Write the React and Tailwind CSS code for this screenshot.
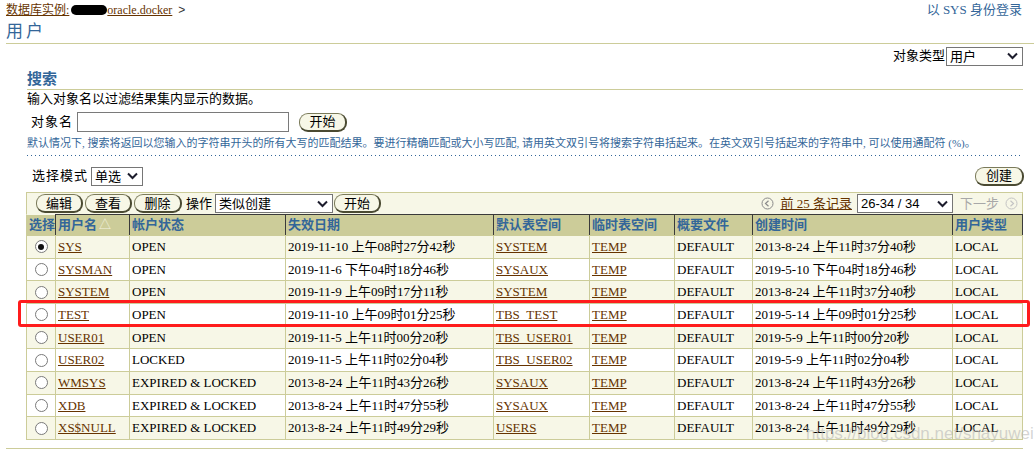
import React from "react";

const SERIF = "font-['Liberation_Serif','Noto_Sans_CJK_SC',serif]";

function Chevron() {
  return (
    <svg width="11" height="8" viewBox="0 0 11 8" className="shrink-0">
      <polyline points="1,1.5 5.5,6 10,1.5" fill="none" stroke="#1c1c2c" strokeWidth="2" />
    </svg>
  );
}

function Select({ w, children, sans }) {
  return (
    <div
      className={`flex items-center justify-between h-[19px] border border-[#767676] bg-white pl-[3px] pr-[4px] text-[13px] leading-none text-black ${sans ? "font-['Liberation_Sans','Noto_Sans_CJK_SC',sans-serif]" : ""}`}
      style={{ width: w }}
    >
      <span>{children}</span>
      <Chevron />
    </div>
  );
}

function Btn({ w, children }) {
  return (
    <div
      className="flex items-center justify-center h-[19px] rounded-[9px] border border-[#7a7a5a] border-b-2 border-r-2 border-b-[#4a4a32] border-r-[#4a4a32] bg-[#f7f7e7] text-[13px] leading-none text-black"
      style={{ width: w }}
    >
      {children}
    </div>
  );
}

function Circ({ dir, color }) {
  return (
    <svg width="13" height="13" viewBox="0 0 13 13" className="shrink-0">
      <circle cx="6.5" cy="6.5" r="5.5" fill="none" stroke={color} strokeWidth="1" />
      {dir === "l" ? (
        <polyline points="7.5,3.8 4.5,6.5 7.5,9.2" fill="none" stroke={color} strokeWidth="1.2" />
      ) : (
        <polyline points="5.5,3.8 8.5,6.5 5.5,9.2" fill="none" stroke={color} strokeWidth="1.2" />
      )}
    </svg>
  );
}

function Radio({ on }) {
  return (
    <div className="w-[13px] h-[13px] rounded-full border border-[#7a7a7a] bg-white flex items-center justify-center">
      {on && <div className="w-[6px] h-[6px] rounded-full bg-[#111]" />}
    </div>
  );
}

const cols = [29, 74, 156, 208, 96, 85, 78, 200, 71];
const heads = ["选择", "用户名", "帐户状态", "失效日期", "默认表空间", "临时表空间", "概要文件", "创建时间", "用户类型"];

const rows = [
  ["SYS", "OPEN", "2019-11-10 上午08时27分42秒", "SYSTEM", "TEMP", "DEFAULT", "2013-8-24 上午11时37分40秒", "LOCAL"],
  ["SYSMAN", "OPEN", "2019-11-6 下午04时18分46秒", "SYSAUX", "TEMP", "DEFAULT", "2019-5-10 下午04时18分46秒", "LOCAL"],
  ["SYSTEM", "OPEN", "2019-11-9 上午09时17分11秒", "SYSTEM", "TEMP", "DEFAULT", "2013-8-24 上午11时37分40秒", "LOCAL"],
  ["TEST", "OPEN", "2019-11-10 上午09时01分25秒", "TBS_TEST", "TEMP", "DEFAULT", "2019-5-14 上午09时01分25秒", "LOCAL"],
  ["USER01", "OPEN", "2019-11-5 上午11时00分20秒", "TBS_USER01", "TEMP", "DEFAULT", "2019-5-9 上午11时00分20秒", "LOCAL"],
  ["USER02", "LOCKED", "2019-11-5 上午11时02分04秒", "TBS_USER02", "TEMP", "DEFAULT", "2019-5-9 上午11时02分04秒", "LOCAL"],
  ["WMSYS", "EXPIRED & LOCKED", "2013-8-24 上午11时43分26秒", "SYSAUX", "TEMP", "DEFAULT", "2013-8-24 上午11时43分26秒", "LOCAL"],
  ["XDB", "EXPIRED & LOCKED", "2013-8-24 上午11时47分55秒", "SYSAUX", "TEMP", "DEFAULT", "2013-8-24 上午11时47分55秒", "LOCAL"],
  ["XS$NULL", "EXPIRED & LOCKED", "2013-8-24 上午11时49分29秒", "USERS", "TEMP", "DEFAULT", "2013-8-24 上午11时49分29秒", "LOCAL"],
];

const linkCols = new Set([0, 3, 4]);

export default function App() {
  return (
    <div className={`relative w-[1034px] h-[450px] overflow-hidden bg-white text-black ${SERIF}`}>
      {/* breadcrumb row */}
      <div className="flex items-center justify-between h-[19px] pl-[6px] pr-[12px]">
        <div className="flex items-center text-[12px] leading-none">
          <span className="text-[#663300] underline flex items-center">
            数据库实例:
            <span className="inline-block w-[36px] h-[10px] rounded-full bg-black ml-[2px]" />
            oracle.docker
          </span>
          <span className="ml-[6px] text-[#333] font-['Liberation_Sans',sans-serif] text-[12px]">&gt;</span>
        </div>
        <div className="text-[13px] leading-none text-[#336699]">以 SYS 身份登录</div>
      </div>

      {/* title */}
      <div className="h-[24px] pl-[6px] text-[17px] leading-[26px] tracking-[3px] text-[#336699]">用户</div>
      <div className="ml-[6px] h-px bg-[#cccc99]" />

      {/* object type */}
      <div className="mt-[3px] h-[18px] flex items-center justify-end pr-[11px] text-[13px]">
        <span className="mr-[1px]">对象类型</span>
        <Select w={77}>用户</Select>
      </div>

      {/* search */}
      <div className="ml-[27px] mr-[11px]">
        <div className="h-[24px] pt-[6px] text-[15px] leading-[16px] font-bold text-[#336699]">搜索</div>
        <div className="h-px bg-[#cccc99]" />
        <div className="h-[18px] text-[13px] leading-[18px]">输入对象名以过滤结果集内显示的数据。</div>
        <div className="mt-[4px] h-[20px] flex items-center text-[13px]">
          <span className="ml-[4px] tracking-[1px]">对象名</span>
          <div className="ml-[4px] w-[212px] h-[20px] border border-[#7a7a7a] bg-white" />
          <div className="ml-[10px]">
            <Btn w={48}>开始</Btn>
          </div>
        </div>
        <div className="h-[22px] text-[11px] leading-[22px] text-[#336699] whitespace-nowrap">
          默认情况下, 搜索将返回以您输入的字符串开头的所有大写的匹配结果。要进行精确匹配或大小写匹配, 请用英文双引号将搜索字符串括起来。在英文双引号括起来的字符串中, 可以使用通配符 (%)。
        </div>
        <div className="mt-[1px] h-px bg-[repeating-linear-gradient(to_right,#336699_0px,#336699_1px,transparent_1px,transparent_4px)]" />
      </div>

      {/* selection mode */}
      <div className="mt-[11px] ml-[32px] mr-[10px] h-[18px] flex items-center justify-between text-[13px]">
        <div className="flex items-center">
          <span className="tracking-[1px]">选择模式</span>
          <div className="ml-[3px]">
            <Select w={52}>单选</Select>
          </div>
        </div>
        <Btn w={49}>创建</Btn>
      </div>

      {/* table */}
      <div className="mt-[7px] ml-[26px] w-[997px]">
        <div className="h-[22px] flex items-center justify-between bg-[#f7f7e7] border border-b-0 border-[#cccc99] pl-[9px] pr-[4px] text-[13px]">
          <div className="flex items-center">
            <Btn w={47}>编辑</Btn>
            <div className="ml-[2px]"><Btn w={47}>查看</Btn></div>
            <div className="ml-[2px]"><Btn w={48}>删除</Btn></div>
            <span className="ml-[4px] mr-[3px]">操作</span>
            <Select w={118}>类似创建</Select>
            <div className="ml-[1px]"><Btn w={47}>开始</Btn></div>
          </div>
          <div className="flex items-center">
            <Circ dir="l" color="#8a8a8a" />
            <span className="ml-[6px] text-[#663300] underline">前 25 条记录</span>
            <div className="ml-[5px]">
              <Select w={96} sans>26-34 / 34</Select>
            </div>
            <span className="ml-[7px] text-[#a8a8a8]">下一步</span>
            <div className="ml-[6px]"><Circ dir="r" color="#c4c4c4" /></div>
          </div>
        </div>

        {/* header */}
        <div className="flex h-[21px] bg-[#cccc99]">
          {heads.map((h, i) => (
            <div
              key={h}
              className={`h-full flex items-center pl-[2px] text-[13px] font-bold text-[#336699] whitespace-nowrap ${
                i === 0
                  ? "border-l border-[#cccc99] border-t border-t-[#f7f7e7]"
                  : "border-l border-t border-[#3a3a3a]"
              } ${i === heads.length - 1 ? "border-r border-r-[#3a3a3a]" : ""}`}
              style={{ width: cols[i] }}
            >
              {h}
              {i === 1 && <span className="ml-[2px] text-[#f4f4e0] font-normal text-[12px]">△</span>}
            </div>
          ))}
        </div>

        {/* rows */}
        {rows.map((r, ri) => (
          <div
            key={ri}
            className={`flex h-[22.67px] border-t border-[#cccc99] ${ri % 2 === 0 ? "bg-[#f7f7e7]" : "bg-white"}`}
          >
            <div
              className="h-full flex items-center justify-center border-l border-[#cccc99]"
              style={{ width: cols[0] }}
            >
              <Radio on={ri === 0} />
            </div>
            {r.map((c, ci) => (
              <div
                key={ci}
                className={`h-full flex items-center pl-[2px] text-[13px] whitespace-nowrap border-l border-[#cccc99] ${
                  ci === r.length - 1 ? "border-r" : ""
                }`}
                style={{ width: cols[ci + 1] }}
              >
                {linkCols.has(ci) ? <span className="text-[#663300] underline">{c}</span> : c}
              </div>
            ))}
          </div>
        ))}
        <div className="h-px bg-[#cccc99]" />
      </div>

      <div className="mt-[8px] ml-[6px] mr-[11px] h-px bg-[#cccc99]" />

      {/* watermark */}
      <div className="absolute left-[806px] top-[421px] text-[17px] font-['Liberation_Sans',sans-serif] text-[#b8b8b8]/60 pointer-events-none">
        https://blog.csdn.net/shayuwei
      </div>

      {/* red highlight */}
      <div className="absolute left-[18px] top-[300px] w-[1012px] h-[27px] border-[3px] border-[#ff1c1c] rounded-[3px] pointer-events-none" />
    </div>
  );
}
